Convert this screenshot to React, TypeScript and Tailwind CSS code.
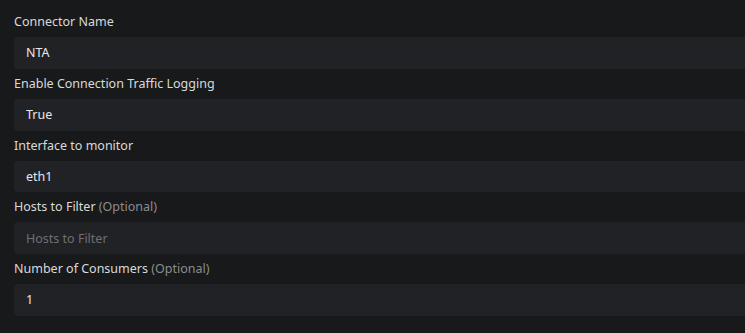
import React from 'react';

const fields = [
  { label: 'Connector Name', value: 'NTA' },
  { label: 'Enable Connection Traffic Logging', value: 'True' },
  { label: 'Interface to monitor', value: 'eth1' },
  { label: 'Hosts to Filter', optional: true, placeholder: 'Hosts to Filter' },
  { label: 'Number of Consumers', optional: true, value: '1' },
];

export default function App() {
  return (
    <div
      className="min-h-[333px] w-full overflow-hidden bg-[#18191b] pl-[14px] pt-[12px]"
      style={{ fontFamily: '"Noto Sans", "Open Sans", sans-serif' }}
    >
      <div className="flex flex-col gap-[5px] mr-[-20px]">
        {fields.map(f => (
          <div key={f.label} className="flex flex-col gap-[5px]">
            <label className="text-[12.5px] leading-[20px] text-[#d8d9db]">
              {f.label}
              {f.optional && <span className="text-[#8b8c8f]"> (Optional)</span>}
            </label>
            <input
              readOnly
              defaultValue={f.value}
              placeholder={f.placeholder}
              className="h-[31.75px] w-full rounded-[4px] bg-[#212226] px-[12px] text-[12.5px] text-[#e6e7e9] placeholder:text-[#6e6f73] outline-none"
            />
          </div>
        ))}
      </div>
    </div>
  );
}
